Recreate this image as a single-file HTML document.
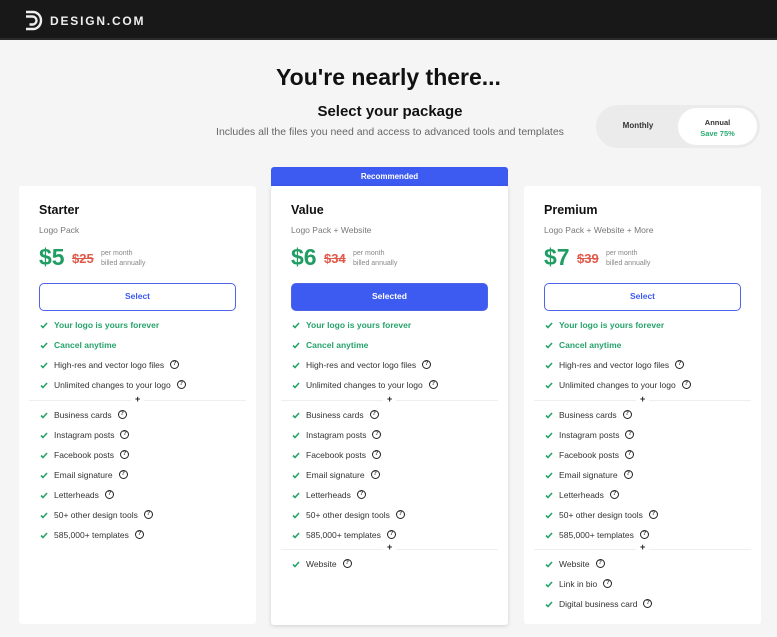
<!DOCTYPE html>
<html><head><style>
*{margin:0;padding:0;box-sizing:border-box}
body{width:777px;height:637px;background:#f5f5f5;font-family:"Liberation Sans",sans-serif;position:relative;overflow:hidden;color:#222}
.hdr{position:absolute;left:0;top:0;width:777px;height:40px;background:#181818;border-bottom:2px solid #2a2a2a}
.logo{position:absolute;left:24px;top:10px}
.brand{position:absolute;left:50px;top:14px;color:#eee;font-weight:bold;font-size:12px;letter-spacing:1.8px}
h1{position:absolute;left:0;width:777px;text-align:center;top:64px;font-size:23px;font-weight:bold;color:#111}
.sub{position:absolute;left:190px;width:400px;text-align:center;top:103px;font-size:15px;font-weight:bold;color:#111}
.desc{position:absolute;left:140px;width:500px;text-align:center;top:126px;font-size:10.5px;color:#666}
.tog{position:absolute;left:596px;top:105px;width:164px;height:43px;border-radius:22px;background:#ebebeb}
.tog .m{position:absolute;left:0;width:84px;top:16px;text-align:center;font-size:8px;font-weight:bold;color:#333}
.tog .a{position:absolute;left:82px;top:3px;width:79px;height:37px;border-radius:19px;background:#fff;text-align:center;font-size:7.5px;font-weight:bold;color:#333;padding-top:9px;line-height:11px}
.tog .a span{color:#2bab73}
.card{position:absolute;top:186px;width:237px;background:#fff;border-radius:3px}
.card.v{box-shadow:0 1px 4px rgba(0,0,0,.15)}
.rec{position:absolute;left:271px;top:167px;width:237px;height:19px;background:#3d5af1;color:#fff;font-size:8px;font-weight:bold;text-align:center;line-height:19px;border-radius:3px 3px 0 0}
.t{position:absolute;left:20px;top:17px;font-size:12.5px;font-weight:bold;color:#111}
.pk{position:absolute;left:20px;top:39px;font-size:8.5px;color:#777}
.pr{position:absolute;left:20px;top:58px;font-size:23px;font-weight:bold;color:#1f9d63}
.old{position:absolute;left:53px;top:65px;font-size:13px;font-weight:bold;color:#e05a4a;text-decoration:line-through}
.pm{position:absolute;left:82px;top:63px;font-size:7px;color:#888;line-height:10px}
.btn{position:absolute;left:20px;top:97px;width:197px;height:28px;border:1.5px solid #4f63e6;border-radius:5px;text-align:center;line-height:25px;font-size:8.5px;font-weight:bold;color:#3d5af1}
.btn.s{background:#3d5af1;color:#fff}
.f{position:absolute;left:21px;font-size:8.5px;color:#333;height:12px;line-height:12px;white-space:nowrap}
.f svg{vertical-align:-1px;margin-right:6px}
.f.g{color:#26a36a;font-weight:bold}
.q{display:inline-block;width:9px;height:9px;border:1.4px solid #222;border-radius:50%;font-size:6px;font-weight:bold;text-align:center;line-height:7px;margin-left:6px;vertical-align:middle;position:relative;top:-1px}
.dv{position:absolute;left:10px;width:217px;border-top:1px solid #eee}
.plus{position:absolute;left:112px;font-size:9px;font-weight:bold;background:#fff;padding:0 4px;color:#222}
</style></head><body>
<div class="hdr">
<svg class="logo" width="20" height="21" viewBox="0 0 20 21"><path d="M2 2h7a8 8.5 0 0 1 0 17H2" fill="none" stroke="#eee" stroke-width="2.4"/><path d="M2 6.5h6.5a4 4 0 0 1 0 8H5.5" fill="none" stroke="#eee" stroke-width="2.4"/></svg>
<div class="brand">DESIGN.COM</div>
</div>
<h1>You're nearly there...</h1>
<div class="sub">Select your package</div>
<div class="desc">Includes all the files you need and access to advanced tools and templates</div>
<div class="tog"><div class="m">Monthly</div><div class="a">Annual<br><span>Save 75%</span></div></div>
<div class="rec">Recommended</div>
<div id="c"></div>
<script>
const ck='<svg width="8" height="7" viewBox="0 0 8 7"><path d="M1 3.5l2 2L7 1" fill="none" stroke="#26a36a" stroke-width="1.6"/></svg>';
const base=[["Your logo is yours forever",1],["Cancel anytime",1],["High-res and vector logo files",0,1],["Unlimited changes to your logo",0,1]];
const mid=["Business cards","Instagram posts","Facebook posts","Email signature","Letterheads","50+ other design tools","585,000+ templates"];
const cards=[[19,"Starter","Logo Pack","$5","$25",0,[],438],[271,"Value","Logo Pack + Website","$6","$34",1,["Website"],439],[524,"Premium","Logo Pack + Website + More","$7","$39",0,["Website","Link in bio","Digital business card"],438]];
let h='';
for(const [x,t,p,pr,o,s,ex,ht] of cards){
h+=`<div class="card ${s?'v':''}" style="left:${x}px;height:${ht}px"><div class="t">${t}</div><div class="pk">${p}</div><div class="pr">${pr}</div><div class="old">${o}</div><div class="pm">per month<br>billed annually</div><div class="btn ${s?'s':''}">${s?'Selected':'Select'}</div>`;
let y=133;
for(const [n,g,q] of base){h+=`<div class="f ${g?'g':''}" style="top:${y}px">${ck}${n}${q?'<span class="q">?</span>':''}</div>`;y+=20;}
h+=`<div class="dv" style="top:214px"></div><div class="plus" style="top:208px">+</div>`;
y=223;for(const n of mid){h+=`<div class="f" style="top:${y}px">${ck}${n}<span class="q">?</span></div>`;y+=20;}
if(ex.length){h+=`<div class="dv" style="top:363px"></div><div class="plus" style="top:356px">+</div>`;y=372;for(const n of ex){h+=`<div class="f" style="top:${y}px">${ck}${n}<span class="q">?</span></div>`;y+=20;}}
h+='</div>';}
document.getElementById('c').innerHTML=h;
</script>
</body></html>
